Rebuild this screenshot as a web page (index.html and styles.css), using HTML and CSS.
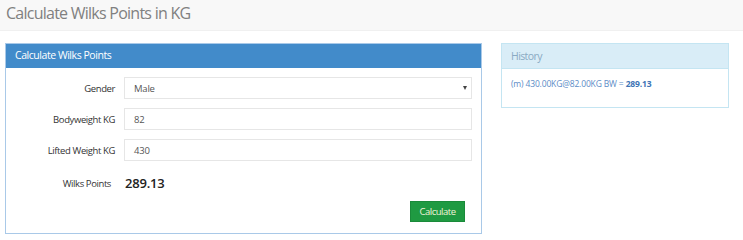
FILE: index.html
```html
<!DOCTYPE html>
<html>
<head>
<meta charset="utf-8">
<link rel="stylesheet" href="styles.css">
</head>
<body>
<div class="topbar"><h1 class="title">Calculate Wilks Points in KG</h1></div>
<div class="content">
  <div class="panel main">
    <div class="panel-head">Calculate Wilks Points</div>
    <div class="panel-body">
      <div class="row">
        <label class="lbl">Gender</label>
        <div class="field select"><span>Male</span><span class="caret"></span></div>
      </div>
      <div class="row">
        <label class="lbl">Bodyweight KG</label>
        <div class="field">82</div>
      </div>
      <div class="row">
        <label class="lbl">Lifted Weight KG</label>
        <div class="field">430</div>
      </div>
      <div class="row result">
        <label class="lbl short">Wilks Points</label>
        <div class="value">289.13</div>
      </div>
      <div class="actions"><button class="btn">Calculate</button></div>
    </div>
  </div>
  <div class="panel history">
    <div class="panel-head">History</div>
    <div class="panel-body">(m) 430.00KG@82.00KG BW = <b>289.13</b></div>
  </div>
</div>
</body>
</html>
```
FILE: styles.css
```css
* { box-sizing: border-box; }
body { margin: 0; font-family: "Open Sans", sans-serif; color: #333; background: #fff; }
.topbar { background: #f8f8f8; height: 31px; border-bottom: 1px solid #f0f0f0; padding: 3px 6px 0; }
.title { margin: 0; font-weight: 400; font-size: 16px; letter-spacing: -0.75px; color: #808080; line-height: 20px; }
.content { display: flex; align-items: flex-start; padding: 12px 0 0 5px; gap: 19px; }
.panel { border: 1px solid #a9c9e8; }
.main { width: 477px; height: 191px; }
.main .panel-head { background: #428bca; color: #fff; font-size: 10.5px; letter-spacing: -0.45px; height: 24px; line-height: 22px; padding: 0 9px; }
.main .panel-body { padding: 9px 9px 0 0; }
.row { display: flex; align-items: center; margin-bottom: 9px; }
.lbl { width: 110px; text-align: right; font-size: 9.5px; letter-spacing: -0.4px; color: #333; margin-right: 8px; padding-right: 1px; }
.lbl.short { padding-right: 5px; }
.field { flex: 1; height: 22px; border: 1px solid #e6e6e6; font-size: 9.5px; letter-spacing: -0.2px; color: #555; padding: 0 9px; display: flex; align-items: center; justify-content: space-between; }
.caret { width: 0; height: 0; border-left: 2.5px solid transparent; border-right: 2.5px solid transparent; border-top: 4px solid #444; margin-right: -5px; }
.result { margin-top: 13px; }
.value { font-size: 13px; font-weight: 600; letter-spacing: -0.2px; color: #222; margin-left: 1px; }
.actions { display: flex; justify-content: flex-end; padding-right: 7px; margin-top: 3px; }
.btn { background: #1f9a42; border: 1px solid #1a8a3a; color: #f3f3d9; font-family: "Open Sans", sans-serif; font-size: 9.5px; letter-spacing: -0.5px; height: 21px; width: 55px; padding: 0; }
.history { width: 228px; border-color: #c4e5f2; }
.history .panel-head { background: #d9edf7; color: #8aaac3; font-size: 10.5px; letter-spacing: -0.6px; height: 25px; line-height: 24px; padding: 0 9px; border-bottom: 1px solid #c4e5f2; }
.history .panel-body { font-size: 8.5px; letter-spacing: -0.15px; color: #5b8bc6; padding: 9px 9px 18px; }
.history b { font-weight: 700; color: #3d74b5; }
```
